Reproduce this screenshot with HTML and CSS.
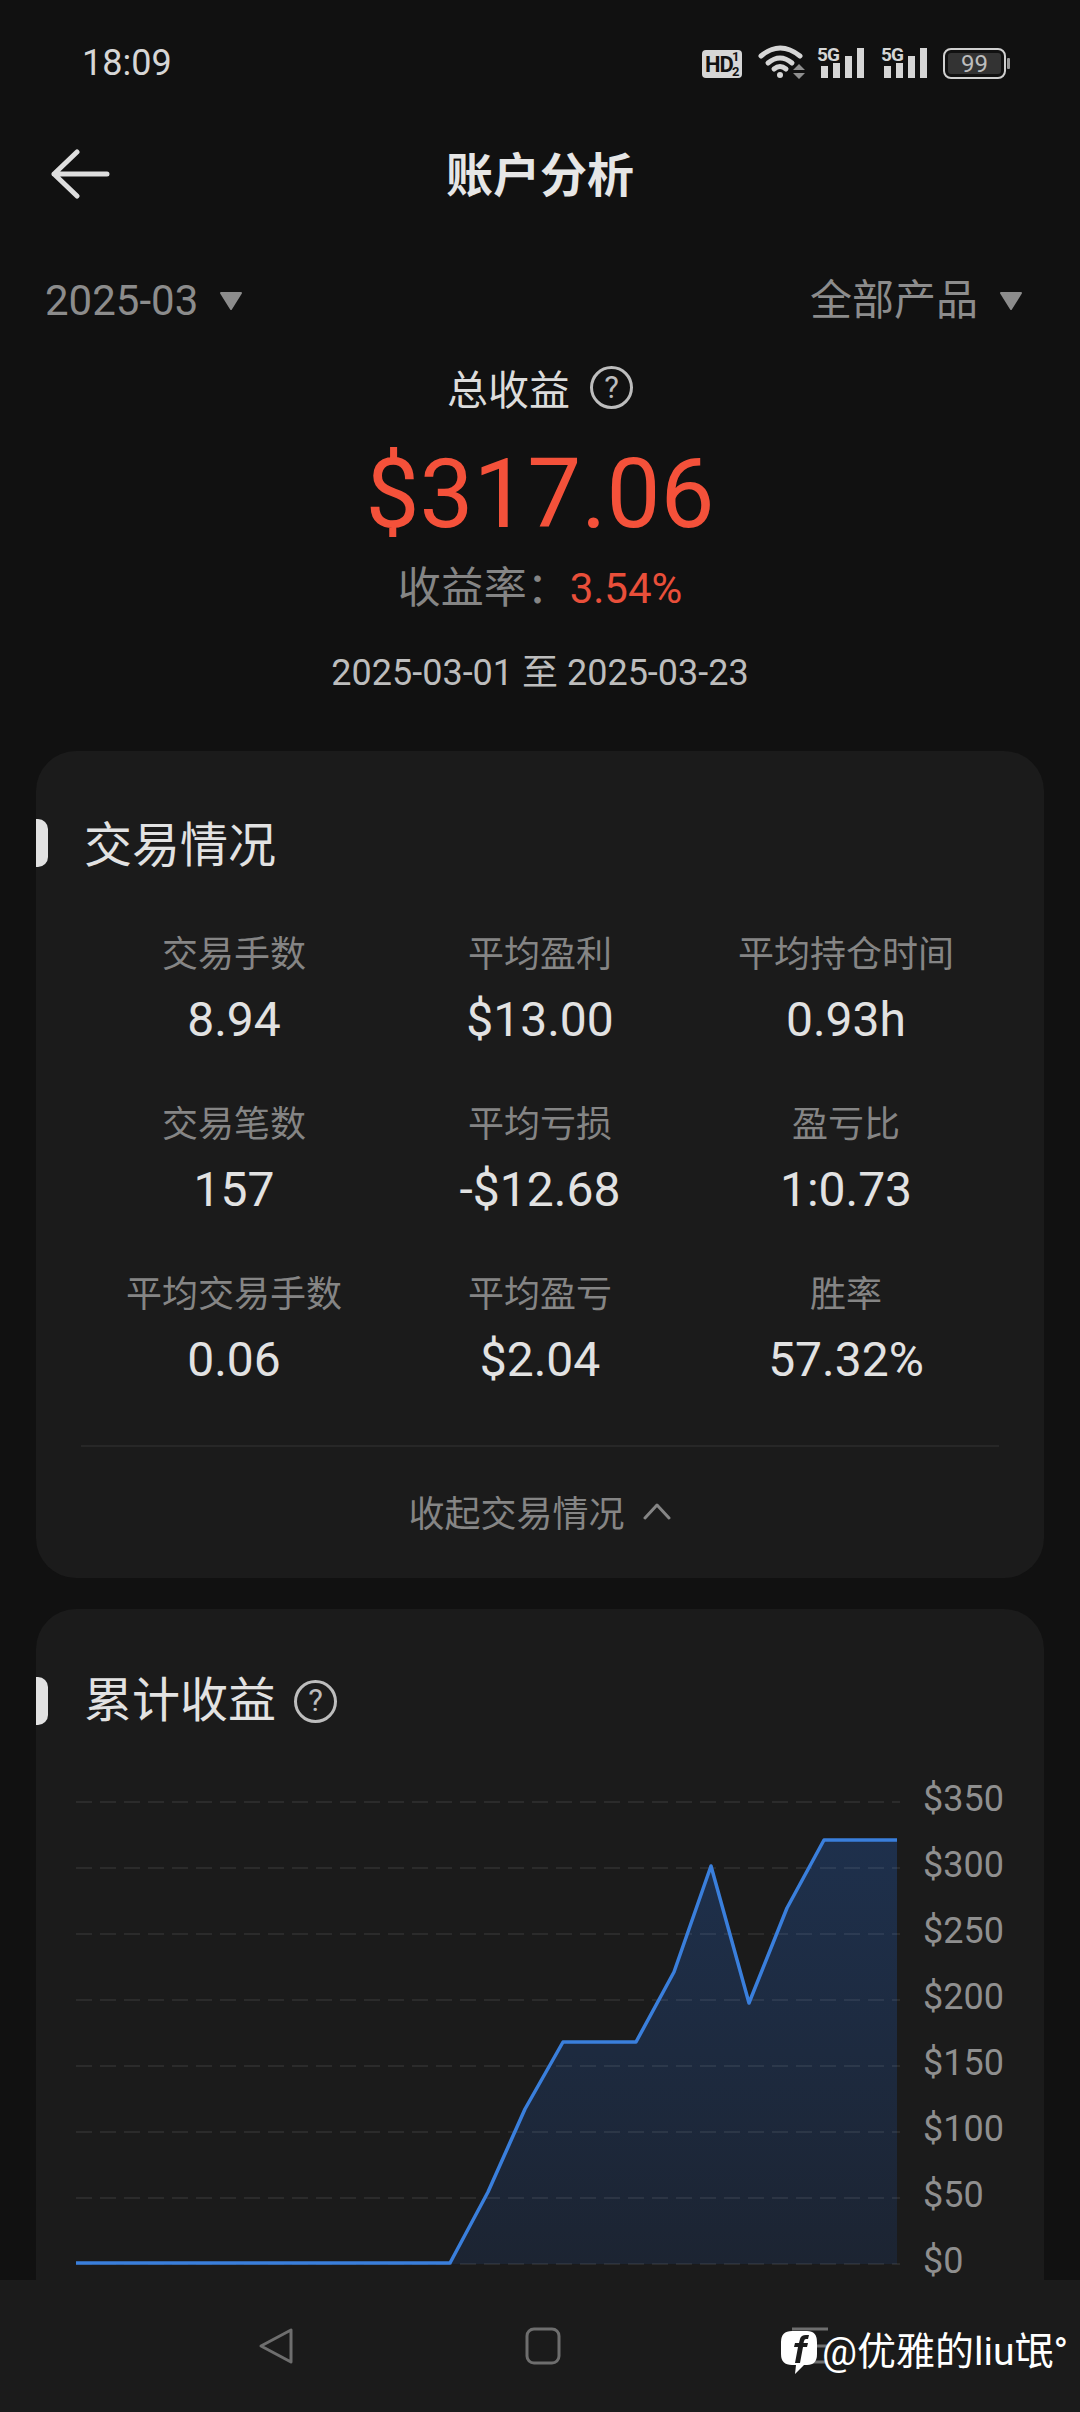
FILE: index.html
```html
<!DOCTYPE html>
<html lang="zh-CN">
<head>
<meta charset="utf-8">
<title>账户分析</title>
<link rel="stylesheet" href="styles.css">
</head>
<body>
<div class="screen">
  <header class="status">
    <span class="time">18:09</span>
    <svg class="status-icons" width="320" height="40" viewBox="700 42 320 40" aria-hidden="true">
      <rect x="702" y="49" width="40" height="28" rx="4" fill="#d6d6d6"/>
      <text x="705" y="71" class="st-hd">HD</text>
      <text x="732" y="60" class="st-frac">1</text>
      <text x="732" y="75" class="st-frac">2</text>
      <path d="M761 55 Q780 39 800 55" class="st-wifi"/>
      <path d="M768 62 Q780 52 792 62" class="st-wifi"/>
      <path d="M774 68 Q780 63 786 68" class="st-wifi"/>
      <circle cx="780" cy="74" r="3" fill="#d6d6d6"/>
      <path d="M793 69 L799 63 L805 69 Z M793 72 L805 72 L799 78 Z" fill="#8f8f8f"/>
      <text x="817" y="60" class="st-5g">5G</text>
      <rect x="821" y="65" width="7" height="12" fill="#d6d6d6"/>
      <rect x="833" y="62" width="7" height="15" fill="#d6d6d6"/>
      <rect x="845" y="55" width="7" height="22" fill="#d6d6d6"/>
      <rect x="857" y="47" width="7" height="30" fill="#d6d6d6"/>
      <text x="881" y="60" class="st-5g">5G</text>
      <rect x="884" y="65" width="7" height="12" fill="#d6d6d6"/>
      <rect x="896" y="62" width="7" height="15" fill="#d6d6d6"/>
      <rect x="908" y="55" width="7" height="22" fill="#d6d6d6"/>
      <rect x="920" y="47" width="7" height="30" fill="#d6d6d6"/>
      <rect x="944" y="48" width="61" height="29" rx="7" fill="#111" stroke="#d0d0d0" stroke-width="2"/>
      <rect x="948" y="52" width="53" height="21" rx="3" fill="#333"/>
      <text x="974.500" y="71" class="st-batt">99</text>
      <rect x="1007" y="57" width="3" height="11" rx="1" fill="#9a9a9a"/>
    </svg>
  </header>

  <nav class="topbar">
    <svg class="back" width="60" height="50" viewBox="0 0 60 50" aria-hidden="true">
      <path d="M27 3 L4 25 L27 47 M4 25 H57" fill="none" stroke="#dedede" stroke-width="5" stroke-linecap="round" stroke-linejoin="round"/>
    </svg>
    <h1 class="page-title">账户分析</h1>
  </nav>

  <div class="filters">
    <div class="filter">
      <span>2025-03</span>
      <svg class="caret" width="24" height="20" viewBox="0 0 24 20" aria-hidden="true"><path d="M2 2 H22 L12 18 Z" fill="#8c8c8c" stroke="#8c8c8c" stroke-width="2" stroke-linejoin="round"/></svg>
    </div>
    <div class="filter">
      <span>全部产品</span>
      <svg class="caret" width="24" height="20" viewBox="0 0 24 20" aria-hidden="true"><path d="M2 2 H22 L12 18 Z" fill="#8c8c8c" stroke="#8c8c8c" stroke-width="2" stroke-linejoin="round"/></svg>
    </div>
  </div>

  <section class="summary">
    <div class="summary-head"><span>总收益</span><span class="help">?</span></div>
    <div class="hero">$317.06</div>
    <div class="rate"><span class="rate-label">收益率：</span><span class="rate-value">3.54%</span></div>
    <div class="range">2025-03-01 至 2025-03-23</div>
  </section>

  <section class="card card-stats">
    <h2 class="card-title"><span>交易情况</span></h2>
    <div class="stats">
      <div class="stat"><span class="stat-label">交易手数</span><span class="stat-value">8.94</span></div>
      <div class="stat"><span class="stat-label">平均盈利</span><span class="stat-value">$13.00</span></div>
      <div class="stat"><span class="stat-label">平均持仓时间</span><span class="stat-value">0.93h</span></div>
      <div class="stat"><span class="stat-label">交易笔数</span><span class="stat-value">157</span></div>
      <div class="stat"><span class="stat-label">平均亏损</span><span class="stat-value">-$12.68</span></div>
      <div class="stat"><span class="stat-label">盈亏比</span><span class="stat-value">1:0.73</span></div>
      <div class="stat"><span class="stat-label">平均交易手数</span><span class="stat-value">0.06</span></div>
      <div class="stat"><span class="stat-label">平均盈亏</span><span class="stat-value">$2.04</span></div>
      <div class="stat"><span class="stat-label">胜率</span><span class="stat-value">57.32%</span></div>
    </div>
    <div class="collapse">
      <span>收起交易情况</span>
      <svg width="30" height="18" viewBox="0 0 30 18" aria-hidden="true"><path d="M3 16 L15 3 L27 16" fill="none" stroke="#858585" stroke-width="3" stroke-linecap="round" stroke-linejoin="round"/></svg>
    </div>
  </section>

  <section class="card card-chart">
    <h2 class="card-title"><span>累计收益</span><span class="help">?</span></h2>
    <div class="chart">
      <svg class="plot" width="830" height="528" viewBox="76 1769 830 528" aria-hidden="true">
        <defs>
          <linearGradient id="area" x1="0" y1="0" x2="0" y2="1">
            <stop offset="0" stop-color="#1e304c"/>
            <stop offset="1" stop-color="#1c2432"/>
          </linearGradient>
        </defs>
        <path d="M450 2264 L488 2192 L525 2109 L563 2042 L636 2042 L674 1972 L711 1866 L749 2003 L787 1908 L824 1840 L897 1840 V2264 Z" fill="url(#area)"/>
        <g class="grid-lines">
          <path d="M76 1802 H900"/><path d="M76 1868 H900"/><path d="M76 1934 H900"/><path d="M76 2000 H900"/>
          <path d="M76 2066 H900"/><path d="M76 2132 H900"/><path d="M76 2198 H900"/><path d="M76 2264 H900"/>
        </g>
        <path d="M76 2263 H450 L488 2192 L525 2109 L563 2042 H636 L674 1972 L711 1866 L749 2003 L787 1908 L824 1840 H897" fill="none" stroke="#3a7fdc" stroke-width="3.500" stroke-linejoin="round"/>
      </svg>
      <div class="axis">
        <span>$350</span><span>$300</span><span>$250</span><span>$200</span><span>$150</span><span>$100</span><span>$50</span><span>$0</span>
      </div>
    </div>
  </section>

  <footer class="navbar">
    <svg width="36" height="38" viewBox="0 0 36 38" aria-hidden="true"><path d="M33 3 V35 L3 19 Z" fill="none" stroke="#6e6e6e" stroke-width="3" stroke-linejoin="round"/></svg>
    <svg width="36" height="38" viewBox="0 0 36 38" aria-hidden="true"><rect x="2" y="2" width="32" height="34" rx="7" fill="none" stroke="#6e6e6e" stroke-width="3"/></svg>
    <svg width="36" height="38" viewBox="0 0 36 38" aria-hidden="true"><path d="M0 2 H36 M0 19 H36 M0 35 H36" stroke="#6e6e6e" stroke-width="3"/></svg>
    <div class="watermark">
      <svg width="38" height="44" viewBox="0 0 38 44" aria-hidden="true">
        <path d="M12 1 H27 Q37 1 37 12 V24 Q37 35 27 35 H24 L15 44 L16 35 H12 Q1 35 1 24 V12 Q1 1 12 1 Z" fill="#fff"/>
        <path d="M15 33 L18 17 H14 L15 13 H19 L20 9 Q21 5 26 5 H29 L28 9 H26 Q24.500 9 24 11 L23.500 13 H28 L27 17 H23 L20 33 Z" fill="#1b1b1b"/>
      </svg>
      <span>@优雅的liu氓°</span>
    </div>
  </footer>
</div>
</body>
</html>
```
FILE: styles.css
```css
* { box-sizing: border-box; }
html, body { margin: 0; padding: 0; background: #111; }
body { font-family: Roboto, "Noto Sans CJK SC", sans-serif; color: #e6e6e6; }
h1, h2 { margin: 0; font-weight: 400; }

.screen { position: relative; width: 1080px; height: 2412px; overflow: hidden; background: #111; }

.status { display: flex; align-items: center; justify-content: space-between; height: 126px; padding: 0 60px 0 82px; }
.time { font-size: 36px; color: #d6d6d6; line-height: 40px; }
.status-icons { margin-top: 0; }
.st-hd { font: 700 22px Roboto, sans-serif; fill: #111; letter-spacing: -1px; }
.st-frac { font: 700 13px Roboto, sans-serif; fill: #111; }
.st-5g { font: 700 19px Roboto, sans-serif; fill: #d6d6d6; letter-spacing: -1px; }
.st-batt { font: 400 24px Roboto, sans-serif; fill: #bdbdbd; text-anchor: middle; }
.st-wifi { fill: none; stroke: #d6d6d6; stroke-width: 5; stroke-linecap: round; }

.topbar { position: relative; display: flex; align-items: center; justify-content: center; height: 100px; }
.back { position: absolute; left: 50px; top: 23px; }
.page-title { font-size: 47px; font-weight: 700; line-height: 60px; color: #e6e6e6; }

.filters { display: flex; justify-content: space-between; align-items: center; height: 60px; margin-top: 45px; padding: 0 57px 0 45px; }
.filter { display: flex; align-items: center; gap: 21px; font-size: 42px; line-height: 60px; color: #8c8c8c; }

.summary { display: flex; flex-direction: column; align-items: center; margin-top: 35px; }
.summary-head { display: flex; align-items: center; gap: 20px; height: 42px; font-size: 41px; color: #dcdcdc; }
.help { display: flex; align-items: center; justify-content: center; width: 43px; height: 43px; border: 3px solid #bdbdbd; border-radius: 50%; font-size: 31px; font-weight: 400; color: #bdbdbd; }
.hero { margin-top: 36px; font-size: 96px; line-height: 100px; color: #f4513a; }
.rate { margin-top: 19px; font-size: 43px; line-height: 50px; }
.rate-label { color: #858585; }
.rate-value { font-size: 42px; color: #e94f3a; }
.range { margin-top: 37px; font-size: 36px; line-height: 44px; color: #bdbdbd; }

.card { background: #1b1b1b; border-radius: 40px; }
.card-stats { margin: 56px 36px 0; padding: 71px 0 3px; }
.card-chart { margin: 31px 36px 0; padding: 68px 0 0 40px; height: 900px; }
.card-title { position: relative; display: flex; align-items: center; gap: 18px; height: 48px; padding-left: 48px; font-size: 48px; line-height: 48px; color: #e2e2e2; }
.card-chart .card-title { padding-left: 8px; }
.card-title::before { content: ""; position: absolute; left: 0; top: -3px; width: 12px; height: 48px; background: #e2e2e2; border-radius: 0 10px 10px 0; }
.card-chart .card-title::before { left: -40px; top: 0; }

.stats { display: grid; grid-template-columns: repeat(3, 306px); justify-content: center; row-gap: 52px; margin-top: 60px; }
.stat { display: flex; flex-direction: column; align-items: center; gap: 12px; }
.stat-label { font-size: 36px; line-height: 50px; color: #858585; }
.stat-value { font-size: 48px; line-height: 56px; color: #e2e2e2; }

.collapse { display: flex; align-items: center; justify-content: center; gap: 17px; height: 130px; margin: 57px 45px 0; border-top: 2px solid #272727; font-size: 36px; color: #858585; }

.chart { display: flex; align-items: flex-start; margin-top: 44px; }
.plot { flex: none; }
.grid-lines path { fill: none; stroke: rgba(255, 255, 255, .07); stroke-width: 2; stroke-dasharray: 16 8; }
.axis { display: flex; flex-direction: column; margin: -3px 0 0 17px; }
.axis span { height: 66px; font-size: 36px; line-height: 66px; color: #8f8f8f; }

.navbar { position: absolute; left: 0; right: 0; bottom: 0; display: flex; align-items: center; gap: 231px; height: 132px; padding-left: 258px; background: #1b1b1b; }
.watermark { position: absolute; left: 780px; top: 50px; display: flex; align-items: center; gap: 4px; font-size: 39px; line-height: 44px; color: #fff; }
```
